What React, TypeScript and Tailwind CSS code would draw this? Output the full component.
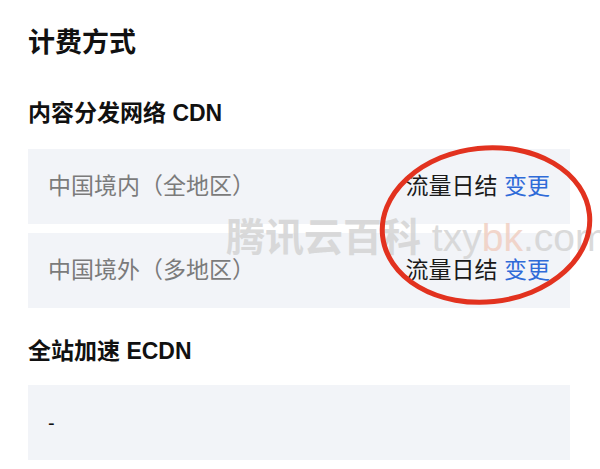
import React from "react"

const font = {
  fontFamily: '"Liberation Sans", "Noto Sans CJK SC", sans-serif',
}

function Row({ label, value }: { label: string; value: string }) {
  return (
    <div className="flex h-[75px] items-center justify-between bg-[#f2f4f8] pl-5 pr-5">
      <span className="text-[23px] text-[#7b7b7b]">{label}</span>
      <span className="text-[23px] text-[#1a1a1a]">
        {value} <span className="text-[#2f6bd8]">变更</span>
      </span>
    </div>
  )
}

export default function App() {
  return (
    <div
      className="relative h-[469px] w-[600px] overflow-hidden bg-white"
      style={font}
    >
      <div className="w-[570px] pl-7 pt-[23px]">
        <h1 className="text-[27px] font-bold leading-[40px] text-[#111]">
          计费方式
        </h1>
        <h2 className="mt-[35px] text-[23px] font-bold leading-[30px] text-[#111]">
          内容分发网络 CDN
        </h2>
        <div className="mt-[21px] flex flex-col gap-[9px]">
          <Row label="中国境内（全地区）" value="流量日结" />
          <Row label="中国境外（多地区）" value="流量日结" />
        </div>
        <h2 className="mt-[28px] text-[23px] font-bold leading-[30px] text-[#111]">
          全站加速 ECDN
        </h2>
        <div className="mt-[19px] flex h-[75px] items-center bg-[#f2f4f8] pl-5">
          <span className="text-[20px] text-[#111]">-</span>
        </div>
      </div>

      {/* watermark */}
      <div className="pointer-events-none absolute left-[226px] top-[208px] whitespace-nowrap text-[39px] leading-[60px] text-[#d4d4d4] opacity-85">
        <span className="font-bold">腾讯云百科</span>{" "}
        <span className="font-normal">
          txy<span className="text-[#f0cfc2]">bk</span>.com
        </span>
      </div>

      {/* red marker ellipse */}
      <svg
        className="pointer-events-none absolute left-0 top-0"
        width="600"
        height="469"
        viewBox="0 0 600 469"
      >
        <ellipse
          cx="486"
          cy="225"
          rx="104"
          ry="77"
          transform="rotate(-6 486 225)"
          fill="none"
          stroke="#e2321f"
          strokeWidth="5"
        />
      </svg>
    </div>
  )
}
